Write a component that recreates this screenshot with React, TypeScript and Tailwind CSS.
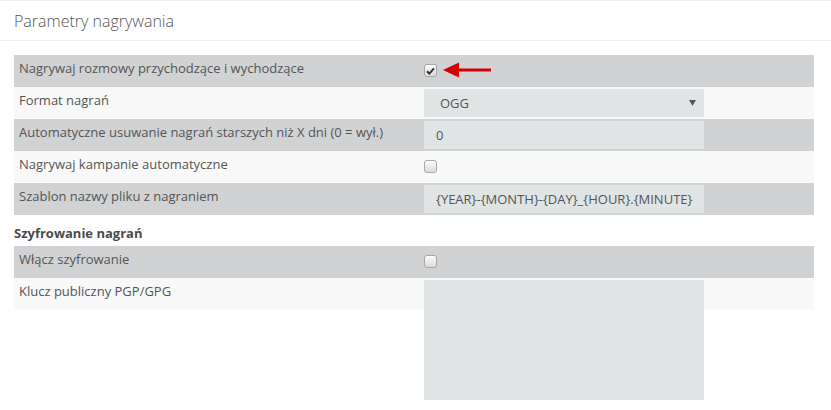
import type { ReactNode } from 'react';

type Row = {
  label: string;
  control: ReactNode;
};

function Checkbox({ checked = false }: { checked?: boolean }) {
  return (
    <span className="mt-[9px] flex h-[13px] w-[13px] items-center justify-center rounded-[3px] border border-[#a5a5a5] bg-gradient-to-b from-[#fbfbfb] to-[#dcdcdc] shadow-[inset_0_1px_0_#fff]">
      {checked && (
        <svg width="9" height="8" viewBox="0 0 9 8">
          <path d="M1 4.2 L3.4 6.6 L8 1.4" fill="none" stroke="#333" strokeWidth="2" />
        </svg>
      )}
    </span>
  );
}

// red pointer shown next to the first checkbox
function Arrow() {
  return (
    <svg width="50" height="16" viewBox="0 0 50 16" className="mt-[7px] ml-[6px]">
      <polygon points="0,8 16,0.5 16,15.5" fill="#d40000" />
      <rect x="15" y="6.5" width="33" height="3" fill="#d40000" />
    </svg>
  );
}

function TextInput({ value }: { value: string }) {
  return (
    <div className="mt-[2px] h-[28px] w-[280px] overflow-hidden whitespace-nowrap bg-[#e1e4e4] pl-[12px] pr-[8px] text-[13px] leading-[28px] text-[#555]">
      {value}
    </div>
  );
}

function Select({ value }: { value: string }) {
  return (
    <div className="mt-[2px] flex h-[28px] w-[280px] items-center justify-between bg-[#e1e4e4] pl-[16px] pr-[8px] text-[13px] leading-[28px] text-[#555]">
      <span>{value}</span>
      <svg width="7" height="6" viewBox="0 0 7 6">
        <polygon points="0,0 7,0 3.5,6" fill="#4a5a60" />
      </svg>
    </div>
  );
}

function SettingsRows({ rows }: { rows: Row[] }) {
  return (
    <div className="flex w-[800px] flex-col">
      {rows.map((row, i) => (
        <div
          key={row.label}
          className={`flex h-[32px] ${i % 2 === 0 ? 'bg-[#d1d2d4]' : 'bg-[#f9f9f9]'}`}
        >
          <div className="w-[410px] pl-[5px] pt-[3px] text-[13px] leading-5 text-[#555]">{row.label}</div>
          <div className="flex items-start">{row.control}</div>
        </div>
      ))}
    </div>
  );
}

export default function App() {
  const recording: Row[] = [
    {
      label: 'Nagrywaj rozmowy przychodzące i wychodzące',
      control: (
        <>
          <Checkbox checked />
          <Arrow />
        </>
      ),
    },
    { label: 'Format nagrań', control: <Select value="OGG" /> },
    { label: 'Automatyczne usuwanie nagrań starszych niż X dni (0 = wył.)', control: <TextInput value="0" /> },
    { label: 'Nagrywaj kampanie automatyczne', control: <Checkbox /> },
    {
      label: 'Szablon nazwy pliku z nagraniem',
      control: <TextInput value="{YEAR}-{MONTH}-{DAY}_{HOUR}.{MINUTE}" />,
    },
  ];

  const encryption: Row[] = [
    { label: 'Włącz szyfrowanie', control: <Checkbox /> },
    {
      label: 'Klucz publiczny PGP/GPG',
      control: <div className="mt-[2px] h-[120px] w-[280px] bg-[#e1e4e4]" />,
    },
  ];

  return (
    <div className="h-[410px] overflow-hidden border-t border-[#eeeeee] bg-white font-['Open_Sans',sans-serif]">
      <div className="flex h-[40px] items-center border-b border-[#f1f1f1] px-[14px] pt-[1px] text-[16px] font-light text-[#555]">
        Parametry nagrywania
      </div>
      <div className="px-[14px] pt-[14px]">
        <SettingsRows rows={recording} />
        <div className="h-[31px] pt-[8px] text-[13px] font-bold leading-5 text-[#4a4a4a]">Szyfrowanie nagrań</div>
        <SettingsRows rows={encryption} />
      </div>
    </div>
  );
}
